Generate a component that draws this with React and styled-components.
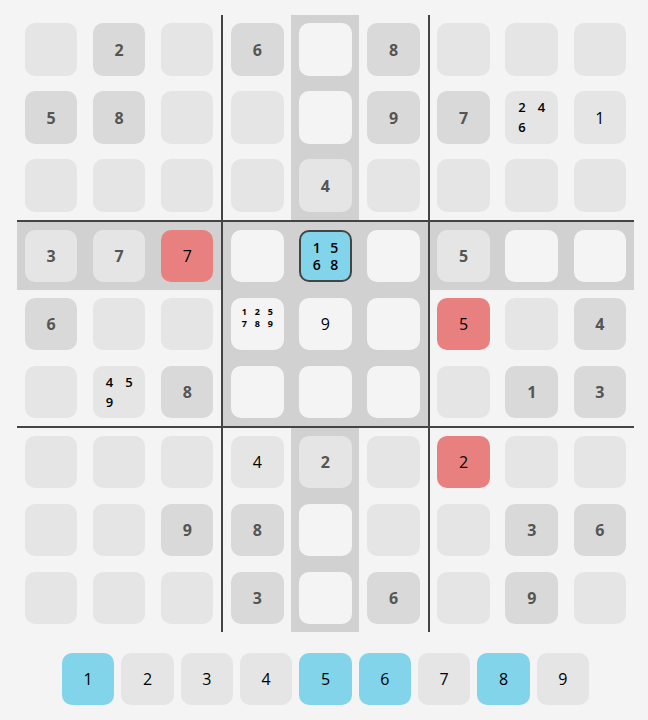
import React from 'react'
import styled, { createGlobalStyle } from 'styled-components'

const GlobalStyle = createGlobalStyle`
  html, body {
    margin: 0;
    padding: 0;
    background: #f4f4f4;
    font-family: "Open Sans", "Noto Sans", sans-serif;
  }
`

const colors = {
  given: '#d9d9d9',
  cell: '#e5e5e5',
  blank: '#f4f4f4',
  blue: '#81d4e9',
  red: '#e98080',
  line: '#444444',
  band: '#d1d1d1',
}

// . empty, g given, u user value, r conflict, p pencil marks
const puzzle = [
  ['.', 'g2', '.', 'g6', '.', 'g8', '.', '.', '.'],
  ['g5', 'g8', '.', '.', '.', 'g9', 'g7', 'p246', 'u1'],
  ['.', '.', '.', '.', 'g4', '.', '.', '.', '.'],
  ['g3', 'g7', 'r7', '.', 'p1568', '.', 'g5', '.', '.'],
  ['g6', '.', '.', 'p125789', 'u9', '.', 'r5', '.', 'g4'],
  ['.', 'p459', 'g8', '.', '.', '.', '.', 'g1', 'g3'],
  ['.', '.', '.', 'u4', 'g2', '.', 'r2', '.', '.'],
  ['.', '.', 'g9', 'g8', '.', '.', '.', 'g3', 'g6'],
  ['.', '.', '.', 'g3', '.', 'g6', '.', 'g9', '.'],
]

const keys = [1, 2, 3, 4, 5, 6, 7, 8, 9]
const activeKeys = [1, 5, 6, 8]
const selected = { row: 3, col: 4 }

const Page = styled.div`
  width: 648px;
  height: 720px;
  box-sizing: border-box;
  padding: 15px 14px 0 17px;
  display: flex;
  flex-direction: column;
  align-items: center;
`

const Board = styled.div`
  display: grid;
  grid-template-columns: 68.1px 68.1px 70.1px 68.1px 68.1px 70.1px 68.1px 68.1px 68.1px;
  grid-template-rows: 68px 68px 71px 68px 68px 70px 68px 68px 68px;
  width: 617px;
  height: 617px;
`

const Slot = styled.div`
  box-sizing: border-box;
  padding: 8px 7.8px ${p => (p.$tight ? '7px' : '8px')};
  background: ${p => (p.$band ? colors.band : 'transparent')};
  border-right: ${p => (p.$lineRight ? `2px solid ${colors.line}` : 'none')};
  border-bottom: ${p => (p.$lineBottom ? `2px solid ${colors.line}` : 'none')};
`

const cellBackground = p => {
  if (p.$selected) return colors.blue
  if (p.$kind === 'r') return colors.red
  if (p.$kind === 'g') return p.$band ? colors.cell : colors.given
  if (p.$band) return colors.blank
  return colors.cell
}

const Cell = styled.div`
  box-sizing: border-box;
  width: 100%;
  height: 100%;
  border-radius: 10px;
  display: flex;
  align-items: center;
  justify-content: center;
  font-size: 16px;
  font-weight: ${p => (p.$kind === 'g' ? 700 : 400)};
  color: ${p => (p.$kind === 'g' ? '#555555' : '#000000')};
  background: ${cellBackground};
  border: ${p => (p.$selected ? `2px solid ${colors.line}` : 'none')};
`

const Pencil = styled.div`
  display: grid;
  width: 100%;
  align-self: ${p => (p.$top ? 'flex-start' : 'center')};
  padding-top: ${p => (p.$top ? '7px' : '0')};
  grid-template-columns: repeat(${p => p.$cols}, ${p => p.$pitch}px);
  grid-auto-rows: ${p => p.$rowPitch}px;
  justify-content: center;
  align-items: center;
  justify-items: center;
  font-size: ${p => p.$size}px;
  font-weight: ${p => p.$weight};
  line-height: 1;
  color: #000000;
`

const Mark = styled.div`
  line-height: 1;
`

const Keypad = styled.div`
  display: grid;
  grid-template-columns: repeat(9, 52.3px);
  gap: 7.05px;
  margin-top: 21px;
`

const Key = styled.div`
  height: 52px;
  border-radius: 10px;
  display: flex;
  align-items: center;
  justify-content: center;
  font-size: 16px;
  color: #000000;
  background: ${p => (p.$active ? colors.blue : colors.cell)};
`

const pencilLayout = digits => {
  if (digits.length === 6) return { cols: 3, pitch: 13, rowPitch: 12, size: 9, weight: 700, top: true }
  if (digits.length === 4) return { cols: 2, pitch: 17.5, rowPitch: 17, size: 14, weight: 600, top: false }
  return { cols: 2, pitch: 19.5, rowPitch: 20, size: 13, weight: 600, top: false }
}

const PencilMarks = ({ digits }) => {
  const l = pencilLayout(digits)
  return (
    <Pencil $cols={l.cols} $pitch={l.pitch} $rowPitch={l.rowPitch} $size={l.size} $weight={l.weight} $top={l.top}>
      {digits.split('').map(d => (
        <Mark key={d}>{d}</Mark>
      ))}
    </Pencil>
  )
}

const inBand = (r, c) =>
  r === selected.row ||
  c === selected.col ||
  (Math.floor(r / 3) === Math.floor(selected.row / 3) && Math.floor(c / 3) === Math.floor(selected.col / 3))

export default function App() {
  return (
    <Page>
      <GlobalStyle />
      <Board>
        {puzzle.map((cells, r) =>
          cells.map((token, c) => {
            const kind = token[0]
            const value = token.slice(1)
            const band = inBand(r, c)
            return (
              <Slot
                key={`${r}-${c}`}
                $band={band}
                $tight={r < 2}
                $lineRight={c === 2 || c === 5}
                $lineBottom={r === 2 || r === 5}
              >
                <Cell $kind={kind} $band={band} $selected={r === selected.row && c === selected.col}>
                  {kind === 'p' ? <PencilMarks digits={value} /> : value}
                </Cell>
              </Slot>
            )
          })
        )}
      </Board>
      <Keypad>
        {keys.map(k => (
          <Key key={k} $active={activeKeys.includes(k)}>
            {k}
          </Key>
        ))}
      </Keypad>
    </Page>
  )
}
